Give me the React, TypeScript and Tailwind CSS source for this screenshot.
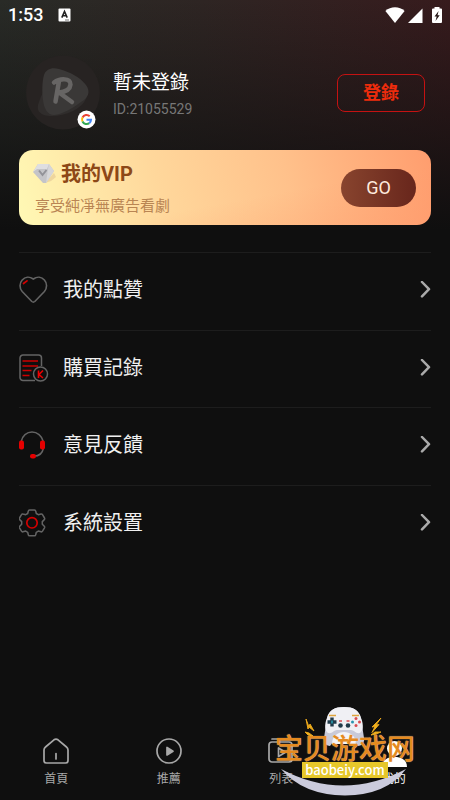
import type { ReactNode } from "react";

const cjk = "font-[Roboto,'Noto_Sans_CJK_TC',sans-serif]";

function StatusBar() {
  return (
    <header className="flex h-[30px] items-center pl-2 pr-2 text-white">
      <span className="w-[50px] text-[18px] leading-[30px] font-medium">1:53</span>
      <svg className="h-[14px] w-[13px]" viewBox="0 0 13 14" aria-hidden="true">
        <rect x="0.5" y="0.5" width="12" height="13" rx="1" fill="#fff" />
        <path d="M3.8 9.6 6.5 3.4 9.2 9.6M4.8 7.8H8.2" fill="none" stroke="#222" strokeWidth="1.6" />
        <path d="M7 12h4" stroke="#777" strokeWidth="1" />
      </svg>
      <svg className="ml-auto h-[18px] w-[57px]" viewBox="0 0 57 18" fill="#fff" aria-hidden="true">
        <path d="M0.4 4.9C5.6 0 14.4 0 19.6 4.9L10 17Z" />
        <path d="M37.5 2.6V17H23Z" />
        <path d="M49.5 2.5V1h5v1.5H56a1 1 0 0 1 1 1V16a1 1 0 0 1-1 1H48a1 1 0 0 1-1-1V3.5a1 1 0 0 1 1-1Z" />
        <path d="M53.6 5 49.5 10.5h2.2L50.5 15 54.7 9.3H52.500Z" fill="#221414" />
      </svg>
    </header>
  );
}

function Avatar() {
  return (
    <svg className="h-[75px] w-[75px] shrink-0" viewBox="0 0 75 75" role="img" aria-label="R">
      <circle cx="37" cy="37.5" r="37" fill="#272322" />
      <path d="M12 50c3-10 8-22 20-27 11-1 24 2 28 10 4 9-3 18-13 23-10 5-22 6-29 4-5-2-7-5-6-10Z" fill="#302d2c" />
      <path d="M18 20c2-6 8-8 15-6 11 3 21 8 27 16 5 7 2 13-5 17-8 6-18 12-27 13-6 0-10-6-11-15-1-8-1-18 1-25Z" fill="#3a3837" />
      <path d="M33 26 29.5 46.5M28 27.5C34 23 45 23 44.500 29.500 44 35 38 37 33 37.500L46 47" fill="none" stroke="#676564" strokeWidth="4.500" strokeLinecap="round" strokeLinejoin="round" />
      <circle cx="60.5" cy="64.5" r="9" fill="#fff" />
      <g fill="none" strokeWidth="2">
        <path d="M63.7 61.2A4.5 4.5 0 0 0 56.5 62.5" stroke="#ea4335" />
        <path d="M56.5 62.5a4.5 4.5 0 0 0 0 4" stroke="#fbbc05" />
        <path d="M56.5 66.5a4.5 4.5 0 0 0 6.8 1.6" stroke="#34a853" />
        <path d="M60.5 64.7h4.5a4.5 4.5 0 0 1-1.7 3.4" stroke="#4285f4" />
      </g>
    </svg>
  );
}

function VipGem() {
  return (
    <svg className="h-[22px] w-[26px]" viewBox="0 0 26 22" aria-hidden="true">
      <path d="M12 20 21 10 23 14 18 18Z" fill="#e3c595" opacity=".6" />
      <path d="M5 1h11l5 7-8 12h-3L0 9Z" fill="#c4c4c8" />
      <path d="M5 1h11l-2 5H4L0 9Z" fill="#dedee1" />
      <path d="M16 1l5 7-8 12 2-14Z" fill="#d6d6d9" />
      <path d="M6 7.500 9.500 12l4-5" fill="none" stroke="#929298" strokeWidth="2" />
    </svg>
  );
}

const iconClass = "h-7 w-[30px] shrink-0";

function HeartIcon() {
  return (
    <svg className={iconClass} viewBox="0 0 30 28" fill="none" strokeLinecap="round" aria-hidden="true">
      <path d="M14.3 3C10.5 .4 6 .8 3.200 4 .3 7.200.3 12 3.200 15.500l9.600 10q1.500 1.200 3 0l9.600-10c2.800-3.500 2.900-8.300 0-11.500C22.600 .8 18.100 .4 14.300 3Z" stroke="#646464" strokeWidth="1.600" />
      <path d="M4.5 7.5 8 4.8" stroke="#d40000" strokeWidth="1.7" />
    </svg>
  );
}

function ReceiptIcon() {
  return (
    <svg className={iconClass} viewBox="0 0 30 28" fill="none" aria-hidden="true">
      <path d="M16 26.5H4a3 3 0 0 1-3-3V4a3 3 0 0 1 3-3H19.5a3 3 0 0 1 3 3V12" stroke="#646464" strokeWidth="1.5" />
      <path d="M3.5 7H19M3.5 12H19M3.5 16.5H12.5M3.5 21.5H10.5" stroke="#c00" strokeWidth="1.7" />
      <circle cx="21.5" cy="20" r="7" stroke="#646464" strokeWidth="1.5" />
      <path d="M19.5 16.5V24M24 16.5 20 20.5 24 24" stroke="#e00" strokeWidth="1.6" />
    </svg>
  );
}

function HeadsetIcon() {
  return (
    <svg className={iconClass} viewBox="0 0 30 28" fill="none" aria-hidden="true">
      <path d="M2 11C3 4.500 8 1 13 1S23 4.500 24.500 11M24.500 17c-1 5-4 8.200-9.500 8.200" stroke="#646464" strokeWidth="1.5" />
      <rect x="0" y="9.5" width="5" height="9" rx="2" fill="#e60000" />
      <rect x="21" y="9.5" width="5" height="9" rx="2" fill="#e60000" />
      <rect x="11" y="23" width="6" height="4.5" rx="2.2" fill="#e60000" />
    </svg>
  );
}

function GearIcon() {
  return (
    <svg className={iconClass} viewBox="0 0 30 28" fill="none" strokeLinejoin="round" aria-hidden="true">
      <path d="M10.500 1h5q1 0 1.200 1l.6 2.500 2 1.200 2.700-.7q1-.2 1.500.6l2 3.400q.5 1-.2 1.600l-2 2v2.600l2 2q.7.7.2 1.600l-2 3.400q-.5.900-1.500.6l-2.700-.7-2 1.200-.6 2.500q-.2 1-1.200 1h-5q-1 0-1.200-1l-.6-2.500-2-1.200-2.700.7q-1 .3-1.500-.6l-2-3.400q-.5-.9.200-1.600l2-2v-2.600l-2-2q-.7-.7-.2-1.600l2-3.400q.5-.9 1.500-.6l2.700.7 2-1.200.6-2.500q.2-1 1.200-1Z" stroke="#646464" strokeWidth="1.5" />
      <circle cx="13" cy="13.8" r="5.2" stroke="#d40000" strokeWidth="1.7" />
    </svg>
  );
}

function MenuRow({ icon, label }: { icon: ReactNode; label: string }) {
  return (
    <li className="border-t border-[#1d1d1d]">
      <button type="button" className="flex h-full w-full items-center pb-0.5 text-left">
        {icon}
        <span className="ml-[14px] text-[20px] leading-7 text-[#f0f0f0]">{label}</span>
        <svg className="ml-auto h-[18px] w-[11px]" viewBox="0 0 11 18" fill="none" aria-hidden="true">
          <path d="M2 1 9 8.200 2 15.400" stroke="#aaa" strokeWidth="2.500" strokeLinecap="round" strokeLinejoin="round" />
        </svg>
      </button>
    </li>
  );
}

function Tab({ label, active, children }: { label: string; active?: boolean; children: ReactNode }) {
  return (
    <a href="#" aria-current={active ? "page" : undefined} className={`flex flex-col items-center gap-1.5 text-[12px] leading-[18px] ${active ? "text-white" : "text-[#a8a8a8]"}`}>
      <svg className="h-[26px] w-[26px] overflow-visible" viewBox="0 0 26 26" fill="none" stroke="currentColor" strokeWidth="1.7" strokeLinejoin="round" strokeLinecap="round" aria-hidden="true">
        {children}
      </svg>
      {label}
    </a>
  );
}

function SiteMark() {
  return (
    <div className="pointer-events-none absolute right-[35px] bottom-1 flex h-[90px] w-[140px] flex-col items-center">
      <svg className="absolute inset-0 h-full w-full" viewBox="0 0 140 90" aria-hidden="true">
        <path d="M6 63Q68 96 131 63Q112 89 70 89.500Q28 89 6 63Z" fill="#cbcbdc" />
        <path d="M52 12C54 4 60 1 69 1s15 3 17 11l3 20c1 5-3 8-6 8l-6-8c-2-3-14-3-16 0l-6 8c-3 0-7-3-6-8Z" fill="#c9cad8" />
        <path d="M52 12C54 4 60 1 69 1s15 3 17 11c3 7 2 13-1 15-4 1-6-3-9-3H62c-3 0-5 4-9 3-3-2-4-8-1-15Z" fill="#f0f0f4" />
        <path d="M57 38c0-16 24-16 24 0Z" fill="#f4f4f8" />
        <path d="M54 9.5h7M77 9.5h7" stroke="#dfa53d" strokeWidth="1.5" />
        <path d="M52.5 16h9M57 11.5v9" stroke="#213b4a" strokeWidth="3.4" />
        <path d="M57 14.5v3" stroke="#29a4b8" strokeWidth="1.5" />
        <circle cx="81" cy="12.5" r="1.5" fill="#d94c51" />
        <circle cx="81" cy="19.5" r="1.5" fill="#d94c51" />
        <circle cx="77.5" cy="16" r="1.5" fill="#2995af" />
        <circle cx="84.5" cy="16" r="1.5" fill="#d94c51" />
        <circle cx="65.5" cy="19.5" r="2.3" fill="#213b4a" />
        <circle cx="73" cy="19.5" r="2.3" fill="#213b4a" />
        <path d="M64 15h3M71.5 15h3" stroke="#d94c51" strokeWidth="1.3" />
        <path d="M31 13l3 8 1-3 4 7-5-4-1 2ZM30 26l4 1 4 3-5-1ZM106 12l-9 9 3-.5-3 6 7-8-3 .5ZM106 26h-6l-4 3 5-1Z" fill="#f3b51b" stroke="#e7a51c" />
      </svg>
      <span className="relative mt-[26px] text-[28px] leading-[30px] font-medium whitespace-nowrap text-[#e58a1f] font-['Noto_Sans_CJK_SC',sans-serif] [text-shadow:0_0_1px_#f8d8a8]">宝贝游戏网</span>
      <span className="relative h-4 bg-[#e6c72a] px-[3px] text-[13px] leading-4 font-medium text-white font-['Noto_Sans_CJK_SC',sans-serif]">baobeiy.com</span>
    </div>
  );
}

export default function App() {
  return (
    <div className={`flex min-h-screen flex-col bg-[#0f0f0f] bg-[linear-gradient(to_bottom,transparent,#0f0f0f_230px),linear-gradient(to_right,#292b27,#2e2523_45%,#371b1d)] ${cjk}`}>
      <StatusBar />
      <main className="px-[19px]">
        <section className="flex items-center pt-[25px] pl-[7px]">
          <Avatar />
          <div className="ml-3 pt-0.5">
            <h1 className="text-[19px] leading-7 text-white">暫未登錄</h1>
            <p className="mt-0.5 text-[14px] leading-5 text-[#777]">ID:21055529</p>
          </div>
          <button type="button" className="mr-1.5 ml-auto h-[38px] w-[88px] rounded-lg border border-[#c51212] text-[18px] leading-7 font-bold text-[#ee2c0c]">登錄</button>
        </section>

        <section className="mt-5 flex h-[75px] items-center rounded-[14px] bg-[linear-gradient(to_bottom_right,transparent_60%,#ff956850),linear-gradient(75deg,#fff9b5,#ffd79b_35%,#ffc18b_65%,#ff9d6e)] pr-[15px] pl-[14px]">
          <div className="pt-0.5">
            <h2 className="flex items-center text-[20px] leading-7 font-bold text-[#8d4817]">
              <VipGem />
              <span className="ml-0.5">我的VIP</span>
            </h2>
            <p className="mt-1.5 pl-0.5 text-[15px] leading-6 text-[#b98553]">享受純凈無廣告看劇</p>
          </div>
          <button type="button" className="ml-auto h-[38px] w-[75px] rounded-full bg-linear-to-r from-[#88442e] to-[#68261c] text-[18px] text-[#ffeadd]">GO</button>
        </section>

        <ul className="mt-[27px] grid h-[310px] grid-rows-4">
          <MenuRow icon={<HeartIcon />} label="我的點贊" />
          <MenuRow icon={<ReceiptIcon />} label="購買記錄" />
          <MenuRow icon={<HeadsetIcon />} label="意見反饋" />
          <MenuRow icon={<GearIcon />} label="系統設置" />
        </ul>
      </main>

      <nav className="relative mt-auto grid grid-cols-4 pb-3">
        <Tab label="首頁">
          <path d="M11 1.800 2.500 9Q1 10.200 1 12v10.500q0 2.500 2.500 2.500h19q2.500 0 2.500-2.500V12q0-1.800-1.500-3L15 1.800q-2-1.500-4 0ZM13 15.500v5.500" />
        </Tab>
        <Tab label="推薦">
          <circle cx="13" cy="13" r="12" />
          <path d="M11 9.500v7.500l6-3.700Z" fill="currentColor" />
        </Tab>
        <Tab label="列表">
          <rect x="1" y="4" width="23" height="20" rx="3" />
          <path d="M4 1h17M10.500 10v8.500l7-4.200Z" />
        </Tab>
        <Tab label="我的" active>
          <circle cx="13.5" cy="10.5" r="7.5" fill="currentColor" stroke="none" />
          <path d="M1 29c0-6 4-10 12.500-10S26 23 26 29Z" fill="currentColor" stroke="none" />
        </Tab>
        <SiteMark />
      </nav>
    </div>
  );
}
